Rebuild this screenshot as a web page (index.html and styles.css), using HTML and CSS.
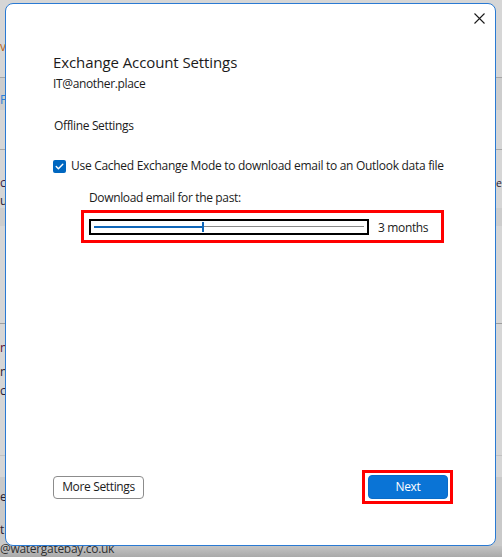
FILE: index.html
```html
<!DOCTYPE html>
<html lang="en">
<head>
<meta charset="utf-8">
<title>Exchange Account Settings</title>
<link rel="stylesheet" href="styles.css">
</head>
<body>
<div class="backdrop">
  <div class="bg-line l77"></div>
  <div class="bg-band b78"></div>
  <div class="bg-line l150"></div>
  <div class="bg-band b208"></div>
  <div class="bg-line l323"></div>
  <div class="bg-line l455"></div>
  <div class="bg-band b477"></div>
  <span class="frag f-w">v</span>
  <span class="frag f-f">F</span>
  <span class="frag f-co">c</span>
  <span class="frag f-u">u</span>
  <span class="frag f-e">e</span>
  <span class="frag f-n">n</span>
  <span class="frag f-ne">n</span>
  <span class="frag f-ca">c</span>
  <span class="frag f-ec">e</span>
  <span class="frag f-t">t</span>
  <div class="bottom-strip"><span class="bottom-text">@watergatebay.co.uk</span></div>
</div>

<div class="dialog">
  <div class="titlebar">
    <button class="close" aria-label="Close">
      <svg width="11" height="11" viewBox="0 0 11 11"><path d="M0.5 0.5 L10.5 10.5 M10.5 0.5 L0.5 10.5" stroke="#1a1a1a" stroke-width="1.1" fill="none"/></svg>
    </button>
  </div>
  <div class="content">
    <h1 class="title">Exchange Account Settings</h1>
    <div class="account">IT@another.place</div>
    <div class="section">Offline Settings</div>
    <label class="check-row">
      <span class="checkbox"><svg width="13" height="13" viewBox="0 0 13 13"><path d="M3.2 6.6 L5.4 8.8 L9.8 4.2" stroke="#fff" stroke-width="1.4" fill="none" stroke-linecap="round" stroke-linejoin="round"/></svg></span>
      <span class="check-label">Use Cached Exchange Mode to download email to an Outlook data file</span>
    </label>
    <div class="download">
      <div class="download-label">Download email for the past:</div>
      <div class="highlight slider-box">
        <div class="slider">
          <div class="fill"></div>
          <div class="thumb"></div>
          <div class="rest"></div>
        </div>
        <span class="slider-value">3 months</span>
      </div>
    </div>
  </div>
  <div class="footer">
    <button class="btn btn-secondary">More Settings</button>
    <div class="highlight next-hl"><button class="btn btn-primary">Next</button></div>
  </div>
</div>
</body>
</html>
```
FILE: styles.css
```css
* { box-sizing: border-box; }
html, body { margin: 0; padding: 0; }
body {
  width: 502px;
  height: 557px;
  overflow: hidden;
  position: relative;
  background: #d6d6d6;
  font-family: "Open Sans", "Noto Sans", sans-serif;
  color: #1b1b1b;
  padding: 3px 0 0 5px;
}

/* dimmed window behind the dialog */
.backdrop { position: absolute; inset: 0; z-index: 0; }
.bg-line { position: absolute; left: 0; right: 0; height: 1px; background: #a6a6a6; }
.bg-band { position: absolute; left: 0; right: 0; background: #cdcdcd; }
.l77 { top: 77px; }
.b78 { top: 78px; height: 32px; }
.l150 { top: 149px; }
.b208 { top: 208px; height: 18px; }
.l323 { top: 323px; background: #9d9d9d; }
.l455 { top: 455px; background: #c2c2c2; }
.b477 { top: 477px; height: 70px; background: #c9c9c9; }
.frag { position: absolute; font-size: 12px; line-height: 14px; color: #2a2030; }
.f-w { left: 0; top: 40px; color: #b5621a; }
.f-f { left: 0; top: 93px; color: #2b7fd6; }
.f-co { left: 0; top: 176px; color: #3b1f3f; }
.f-u { left: 0; top: 194px; }
.f-e { left: 496px; top: 176px; font-size: 10.5px; }
.f-n { left: 0; top: 341px; color: #5a1035; }
.f-ne { left: 0; top: 365px; }
.f-ca { left: 0; top: 384px; }
.f-ec { left: 0; top: 490px; }
.f-t { left: 0; top: 523px; }
.bottom-strip {
  position: absolute; left: 0; right: 0; top: 546px; height: 11px;
  background: linear-gradient(#c4c4c4, #a9a9a9);
}
.bottom-text {
  display: block; font-size: 12px; line-height: 12px; color: #303030;
  margin-top: -3px; letter-spacing: -0.3px;
}

/* dialog */
.dialog {
  position: relative;
  z-index: 1;
  width: 491px;
  height: 543px;
  background: #fff;
  border: 1px solid #2a7ad3;
  border-radius: 8px;
  display: flex;
  flex-direction: column;
}
.titlebar {
  display: flex;
  justify-content: flex-end;
  padding: 7px 8px 0 0;
  height: 22px;
}
.close {
  width: 15px; height: 15px; padding: 2px; margin: 0;
  border: 0; background: transparent;
  display: flex; align-items: center; justify-content: center;
}
.content { padding-left: 47px; }
.title {
  margin: 26px 0 0;
  font-size: 15px;
  font-weight: 400;
  line-height: 20px;
  letter-spacing: -0.1px;
}
.account, .section, .check-row, .download-label, .slider-value, .btn {
  font-size: 12px;
  letter-spacing: -0.35px;
}
.account { margin-top: 4px; line-height: 16px; }
.section { margin-top: 26px; line-height: 16px; margin-left: 1px; }
.check-row {
  margin-top: 24px;
  display: flex;
  align-items: center;
  gap: 5px;
  height: 16px;
  letter-spacing: -0.29px;
}
.checkbox {
  width: 13px; height: 13px;
  background: #0067c0;
  border-radius: 2px;
  display: flex;
}
.check-label { line-height: 16px; }
.download { margin-top: 16px; margin-left: 28px; }
.download-label { padding-left: 8px; line-height: 16px; }
.highlight { border: 3px solid #ff0000; }
.slider-box {
  margin-top: 4px;
  width: 363px;
  height: 33px;
  padding-left: 5px;
  display: flex;
  align-items: center;
  gap: 9px;
}
.slider {
  width: 280px;
  height: 16px;
  border: 2px solid #000;
  padding: 0 3px;
  display: flex;
  align-items: center;
}
.fill { width: 108px; height: 2px; background: #0f66b8; }
.thumb { width: 2px; height: 10px; background: #0f66b8; }
.rest { flex: 1; height: 1px; background: #8a8a8a; }
.slider-value { line-height: 16px; margin-top: 2px; }

.footer {
  margin-top: auto;
  display: flex;
  justify-content: space-between;
  align-items: center;
  padding: 0 42px 41px 47px;
}
.btn {
  font-family: inherit;
  margin: 0;
  border-radius: 4px;
  line-height: 16px;
  padding: 0;
}
.btn-secondary {
  width: 91px;
  height: 23px;
  background: #fff;
  border: 1px solid #8c8c8c;
  color: #1b1b1b;
}
.next-hl {
  width: 91px;
  height: 34px;
  padding: 2px 2px 2px 3px;
  display: flex;
}
.btn-primary {
  width: 80px;
  height: 24px;
  background: #0a74d6;
  border: 1px solid #0a6cc8;
  color: #fff;
}
```
